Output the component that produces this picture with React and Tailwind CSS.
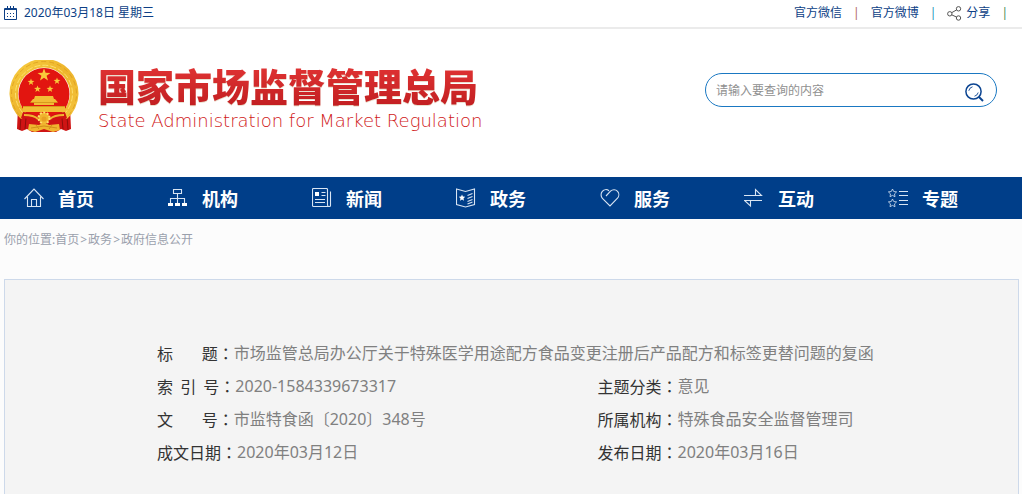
const NAV_ITEMS = [
  { label: "首页", icon: HomeIcon },
  { label: "机构", icon: OrgIcon },
  { label: "新闻", icon: NewsIcon },
  { label: "政务", icon: PolicyIcon },
  { label: "服务", icon: HeartIcon },
  { label: "互动", icon: ExchangeIcon },
  { label: "专题", icon: TopicIcon },
];

const DOC_FIELDS = [
  {
    label: "标\u00a0\u00a0\u00a0\u00a0\u00a0\u00a0\u00a0\u00a0题",
    value: "市场监管总局办公厅关于特殊医学用途配方食品变更注册后产品配方和标签更替问题的复函",
    wide: true,
  },
  { label: "索\u00a0\u00a0引\u00a0\u00a0号", value: "2020-1584339673317" },
  { label: "主题分类", value: "意见" },
  {
    label: "文\u00a0\u00a0\u00a0\u00a0\u00a0\u00a0\u00a0\u00a0号",
    value: "市监特食函〔2020〕348号",
  },
  { label: "所属机构", value: "特殊食品安全监督管理司" },
  { label: "成文日期", value: "2020年03月12日" },
  { label: "发布日期", value: "2020年03月16日" },
];

function NavSvg({ children }) {
  return (
    <svg
      width="21"
      height="21"
      viewBox="0 0 21 21"
      fill="none"
      stroke="#d9e5f3"
      strokeWidth="1.1"
      className="shrink-0"
      aria-hidden="true"
    >
      {children}
    </svg>
  );
}

function HomeIcon() {
  return (
    <NavSvg>
      <path d="M.5 11 10 1l9.500 10" />
      <path d="M3.500 8.500v10h13v-10M7.500 18.500v-7h5v7" />
    </NavSvg>
  );
}

function OrgIcon() {
  return (
    <NavSvg>
      <path d="M5.500 1.500h8v4h-8zM9.500 5.500v10M2.500 15.500v-5h14v5" />
      <path d="M0 15h5v3H0zM7 15h5v3H7zM14 15h5v3h-5z" fill="#fff" stroke="none" />
    </NavSvg>
  );
}

function NewsIcon() {
  return (
    <NavSvg>
      <path d="M18.500 3.500v14q0 1-1 1h-16q-1 0-1-1v-16q0-1 1-1h13q1 0 1 1v15.500q0 1.500 1.500 1.500" />
      <path d="M9.500 4.500h4M9.500 7.500h4M3 11.500h10M3 14.500h10" />
      <path d="M3 4h4v4H3z" fill="#fff" stroke="none" />
    </NavSvg>
  );
}

function PolicyIcon() {
  return (
    <NavSvg>
      <path d="M.5 1 9.500 3.500l9-2.500v15.500l-9 2.500-9-2.500z" />
      <path d="m11.500 7.500 5-2M11.500 10.500l5-2M11.500 13.500l5-2M11.500 16l5-2" />
      <path
        d="m6 6.500.9 2.100 2.300.2-1.700 1.600.5 2.300-2-1.200-2 1.200.5-2.300-1.700-1.600 2.300-.2z"
        fill="#fff"
        stroke="none"
      />
    </NavSvg>
  );
}

function HeartIcon() {
  return (
    <NavSvg>
      <path d="M6 8 10.500 3.200C12.500 1.200 15.700 1.300 17.600 3.300c1.700 2 1.600 5-.1 6.900L10 18 2.400 10.300C.7 8.500.6 5.300 2.300 3.300 4 1.300 7 1.200 9 2.700" />
    </NavSvg>
  );
}

function ExchangeIcon() {
  return (
    <NavSvg>
      <path d="M0 7.500h17.500L11.500 1.500v6M18 12.500H.5l6 5.500v-5.500" />
    </NavSvg>
  );
}

function TopicIcon() {
  return (
    <NavSvg>
      <path
        d="m4.500 1 1.200 2.500 2.900.4-2.100 2 .5 2.800-2.500-1.300L2 8.700l.5-2.800-2.100-2 2.900-.4zM4.500 11 5.700 13.500l2.900.4-2.100 2 .5 2.800-2.500-1.300L2 18.700l.5-2.800-2.100-2 2.900-.4z"
        strokeWidth=".8"
      />
      <path d="M11 3.500h9M11 7.500h9M11 12.500h9M11 16.500h9" />
    </NavSvg>
  );
}

function CalendarIcon() {
  return (
    <svg width="13" height="14" viewBox="0 0 13 14" fill="none" stroke="#0d3f86" aria-hidden="true">
      <path d="M.5 2.500h12v11H.5z" />
      <path d="M0 3.500h13M3.500 0v4M6.500 0v4M9.500 0v4" />
      <path d="M3 7.500h1m2 0h1m2 0h1M3 10.500h1m2 0h1m2 0h1" />
    </svg>
  );
}

function ShareIcon() {
  return (
    <svg width="15" height="15" viewBox="0 0 15 15" fill="none" stroke="#555" aria-hidden="true">
      <circle cx="2.800" cy="7.800" r="2.200" />
      <circle cx="11.500" cy="2.800" r="2.200" />
      <circle cx="11.500" cy="12" r="2.200" />
      <path d="m4.700 6.700 4.900-2.800M4.700 8.800l4.900 2.300" />
    </svg>
  );
}

function SearchIcon() {
  return (
    <svg width="19" height="19" viewBox="0 0 19 19" fill="none" stroke="#0b4491" aria-hidden="true">
      <circle cx="8.500" cy="8.500" r="7.600" strokeWidth="1.500" />
      <path d="m14 14 4 4" strokeWidth="2" />
      <path d="M3.800 7.800A5 5 0 0 1 7.500 3.800M13.200 9.500a5 5 0 0 1-3.700 3.700" strokeWidth=".9" />
    </svg>
  );
}

const STAR = "M0-10 2.350-3.240 9.510-3.090 3.800 1.240 5.880 8.090 0 4 -5.880 8.090 -3.800 1.240 -9.510-3.090 -2.350-3.240z";

function Emblem() {
  return (
    <svg width="70" height="73" viewBox="0 0 70 73" className="shrink-0" role="img" aria-label="国徽">
      <defs>
        <linearGradient id="gold" x1="0" y1="0" x2="1" y2="1">
          <stop offset="0" stopColor="#f8cf42" />
          <stop offset=".5" stopColor="#eeb52c" />
          <stop offset="1" stopColor="#f4c33c" />
        </linearGradient>
      </defs>
      {/* ribbons */}
      <path d="M9 47 8 69l5 2 5-2 5 3h24l5-3 5 2 5-2-1-22z" fill="#cf1414" />
      <path d="m12 56-1 14M17 58l-1 11M58 56l1 14M53 58l1 11" stroke="#8f0e0b" />
      {/* wheat wreath */}
      <path d="M12 59A34.500 34.500 0 1 1 58 59L51 54A26 26 0 1 0 19 54z" fill="url(#gold)" />
      <path
        d="M11 56a32.500 32.500 0 1 1 48 0"
        fill="none"
        stroke="#d9981c"
        strokeDasharray="5 3"
        opacity=".7"
      />
      <path d="M14 53a28.500 28.500 0 1 1 42 0" fill="none" stroke="#ffe77b" strokeDasharray="6 2" opacity=".8" />
      <ellipse cx="35" cy="34" rx="25.500" ry="26" fill="#e21510" />
      {/* stars */}
      <g fill="#f9c93a">
        <path d={STAR} transform="translate(35 15) scale(.68)" />
        <path d={STAR} transform="translate(22 22) scale(.36)" />
        <path d={STAR} transform="translate(48 21) scale(.36)" />
        <path d={STAR} transform="translate(28.500 29) scale(.36)" />
        <path d={STAR} transform="translate(41 29) scale(.36)" />
      </g>
      {/* gate */}
      <g fill="#f2bd35">
        <path d="M26 36h18l1 3H25zM24 39h22l3 3.500H21zM25 42h20v3H25zM14 46h42v6H14z" />
        <path d="M14 46.500h42M22 42.500h26" stroke="#d18f18" strokeWidth=".8" />
      </g>
      {/* gear and knot */}
      <path d="M14 52q12 1 18 7l-3 6q-7-7-17-7zM56 52q-12 1-18 7l3 6q7-7 17-7z" fill="#cf1414" />
      <path d="M15 55q10 0 14 4M55 55q-10 0-14 4" stroke="#f0b52f" strokeWidth="2" fill="none" />
      <circle cx="35" cy="58" r="5.500" fill="#f0b52f" stroke="#ffe06b" strokeWidth="2" strokeDasharray="2 1.500" />
      <circle cx="35" cy="59" r="2.500" fill="#e7a023" />
      <path d="m20 64 10 1 5-3 5 3 10-1 1 6-7 2-9-3-9 3-7-2z" fill="#f0b52f" />
      <path d="m22 68 13-2 13 2M27 65l3 4M43 65l-3 4" stroke="#d18f18" fill="none" />
    </svg>
  );
}

function TopBar() {
  return (
    <div className="flex items-center justify-between h-[29px] pl-1 pr-3.5 pb-px border-b-2 border-[#ebebeb] bg-white text-xs text-[#0d3f86]">
      <div className="flex items-center gap-[7px]">
        <CalendarIcon />
        <span>2020年03月18日 星期三</span>
      </div>
      <div className="flex items-center gap-[11px]">
        <a href="#wechat">官方微信</a>
        <span className="text-[#b0685a]">|</span>
        <a href="#weibo">官方微博</a>
        <span className="text-[#1c93b8]">|</span>
        <a href="#share" className="flex items-center gap-1">
          <ShareIcon />
          分享
        </a>
        <span className="text-[#4a8a50]">|</span>
      </div>
    </div>
  );
}

function Header() {
  return (
    <header className="flex items-start justify-between bg-white pt-[31px] pb-11 pl-[9px] pr-[25px]">
      <a href="#home" className="flex items-start gap-[19px]">
        <Emblem />
        <div className="pt-[3px]">
          <h1 className="text-[38px] leading-[46px] font-black bg-linear-to-b from-[#e23434] to-[#c01d20] bg-clip-text text-transparent drop-shadow-[0_1px_0_#eadfce]">
            国家市场监督管理总局
          </h1>
          <p className="font-['DejaVu_Sans'] font-extralight text-lg leading-6 text-[#d01818]">
            State Administration for Market Regulation
          </p>
        </div>
      </a>
      <form
        className="flex items-center w-[292px] h-[34px] mt-[13px] pl-2.5 pr-3 rounded-full border border-[#1a78c2]"
        onSubmit={(e) => e.preventDefault()}
      >
        <input
          type="text"
          aria-label="搜索"
          placeholder="请输入要查询的内容"
          className="flex-1 min-w-0 pt-0.5 text-xs outline-none placeholder:text-[#909090]"
        />
        <button type="submit" aria-label="查询" className="pt-1">
          <SearchIcon />
        </button>
      </form>
    </header>
  );
}

export default function App() {
  return (
    <div className="flex flex-col min-h-screen bg-[#fcfcfc] font-['Noto_Sans','Noto_Sans_CJK_SC',sans-serif]">
      <TopBar />
      <Header />

      {/* Main nav */}
      <nav className="flex h-[42px] pl-6 bg-[#003e89] text-white">
        {NAV_ITEMS.map(({ label, icon: Icon }) => (
          <a
            key={label}
            href={`#${label}`}
            className="flex items-center gap-[13px] w-36 pt-px shrink-0 last:w-auto text-lg font-bold"
          >
            <Icon />
            {label}
          </a>
        ))}
      </nav>

      {/* Breadcrumb */}
      <div className="flex items-center h-[42px] mb-[18px] px-1 text-xs text-[#9aa0ac]">
        <span>你的位置:</span>
        <a href="#home">首页</a>
        <span className="mx-px">&gt;</span>
        <a href="#gov">政务</a>
        <span className="mx-px">&gt;</span>
        <a href="#open">政府信息公开</a>
      </div>

      {/* Document info */}
      <main className="flex-1 ml-1 mr-[3px] pt-[57px] pb-6 pl-[152px] border border-b-0 border-[#cdd9ea] bg-[#f4f4f4]">
        <dl className="grid grid-cols-2 gap-x-5 text-base leading-[33px]">
          {DOC_FIELDS.map((f) => (
            <div key={f.label} className={f.wide ? "flex col-span-2" : "flex"}>
              <dt className="shrink-0 font-['Noto_Sans_CJK_SC',sans-serif] text-[#333]">
                {f.label}
                <span className="font-['Noto_Sans_CJK_TC',sans-serif]">：</span>
              </dt>
              <dd className="text-[#808080]">{f.value}</dd>
            </div>
          ))}
        </dl>
      </main>
    </div>
  );
}
